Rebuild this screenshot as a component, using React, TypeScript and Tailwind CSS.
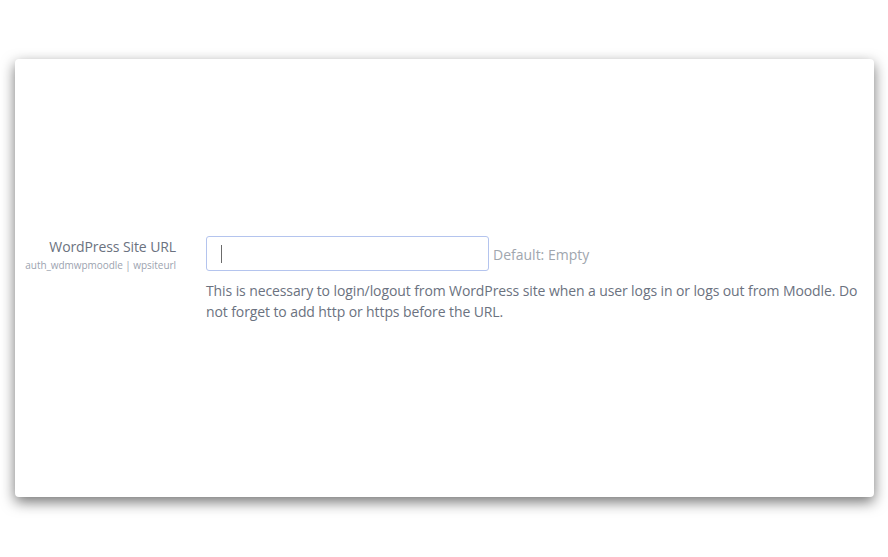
import React from "react";

export default function App() {
  return (
    <div className="w-[888px] h-[557px] bg-white overflow-hidden" style={{ fontFamily: '"Open Sans", sans-serif' }}>
      <div className="ml-[15px] mt-[59px] w-[859px] h-[438px] bg-white rounded-[4px] shadow-[0_5px_14px_rgba(0,0,0,0.55)] pt-[177px]">
        <div className="flex">
          <div className="w-[161px] shrink-0 text-right pt-[1px]">
            <div className="text-[14px] leading-[20px] text-[#6b7280] tracking-[-0.1px]">WordPress Site URL</div>
            <div className="text-[10px] leading-[14px] text-[#9ca3af] mt-[1px] tracking-[-0.05px]">auth_wdmwpmoodle | wpsiteurl</div>
          </div>
          <div className="ml-[30px] flex-1 pr-[2px]">
            <div className="flex items-center">
              <div className="w-[283px] h-[35px] border border-[#b4c4ee] rounded-[3px] flex items-center pl-[14px]">
                <div className="w-[1px] h-[18px] bg-[#6b6b6b]" />
              </div>
              <span className="ml-[4px] text-[14px] leading-[20px] text-[#a0a6ae] mt-[2px]">Default: Empty</span>
            </div>
            <p className="mt-[9px] text-[14px] leading-[21px] text-[#6b7280] tracking-[-0.1px]">
              This is necessary to login/logout from WordPress site when a user logs in or logs out from Moodle. Do not forget to add http or https before the URL.
            </p>
          </div>
        </div>
      </div>
    </div>
  );
}
